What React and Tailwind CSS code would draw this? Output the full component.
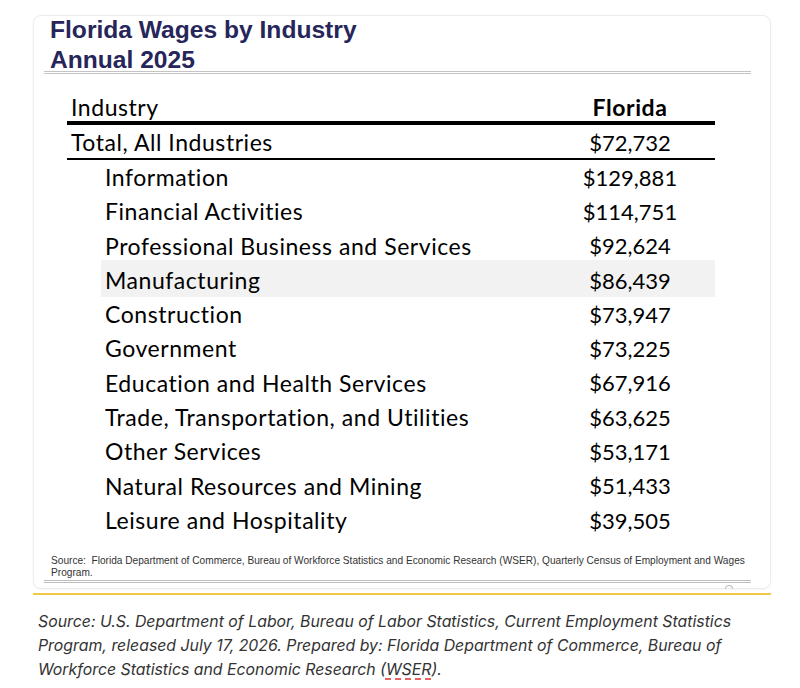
const rows = [
  ["Information", "$129,881"],
  ["Financial Activities", "$114,751"],
  ["Professional Business and Services", "$92,624"],
  ["Manufacturing", "$86,439", true],
  ["Construction", "$73,947"],
  ["Government", "$73,225"],
  ["Education and Health Services", "$67,916"],
  ["Trade, Transportation, and Utilities", "$63,625"],
  ["Other Services", "$53,171"],
  ["Natural Resources and Mining", "$51,433"],
  ["Leisure and Hospitality", "$39,505"],
];

export default function App() {
  return (
    <div className="min-h-[688px] bg-white pl-[33px] pt-[15px]">
      <div className="w-[738px]">
        <div className="relative h-[574px] rounded-lg border border-[#ececec] bg-white shadow-[0_1px_3px_rgba(0,0,0,0.04)]">
          <div className="-mt-[1px] pl-[16px] font-['Liberation_Sans',Arial,sans-serif] text-[24.6px] font-bold leading-[30px] text-[#26265a]">
            <div>Florida Wages by Industry</div>
            <div>Annual 2025</div>
          </div>
          <div className="-mt-[4px] ml-[10px] mr-[19px] h-[3px] border-t-[3px] border-double border-[#c4c4c4]" />
          <div className="ml-[33px] w-[648px] pt-[21px] font-['Lato',sans-serif] text-[22px] text-black">
            <div className="flex h-[30px] items-end border-b-4 border-black">
              <div className="flex-1 pl-[4px] text-[23px] leading-[28px] tracking-[0.55px]">Industry</div>
              <div className="w-[170px] text-center text-[23px] font-bold leading-[28px] tracking-[0.55px]">Florida</div>
            </div>
            <div className="flex h-[35px] items-center border-b-2 border-black pt-[2px]">
              <div className="flex-1 pl-[4px] text-[23px] tracking-[0.55px]">Total, All Industries</div>
              <div className="w-[170px] text-center">$72,732</div>
            </div>
            <div className="pl-[34px]">
              {rows.map(([name, val, hi]) => (
                <div
                  key={name}
                  className={`flex h-[34.3px] items-center ${hi ? "bg-[#f2f2f2] shadow-[0_-3px_0_#f2f2f2]" : ""}`}
                >
                  <div className="flex-1 pl-[4px] text-[23px] tracking-[0.55px]">{name}</div>
                  <div className="w-[170px] text-center">{val}</div>
                </div>
              ))}
            </div>
          </div>
          <div className="mt-[18px] pl-[17px] pr-[20px] font-['Liberation_Sans',Arial,sans-serif] text-[10.15px] leading-[12px] text-[#333]">
            Source:&nbsp; Florida Department of Commerce, Bureau of Workforce Statistics and Economic Research (WSER), Quarterly Census of Employment and Wages Program.
          </div>
          <div className="ml-[10px] mr-[19px] mt-[1px] h-[3px] border-t-[3px] border-double border-[#bdbdbd]" />
          <div className="absolute left-[691px] top-[569px] h-[4px] w-[8px] rounded-t-full border-x border-t border-[#bbb]" />
        </div>
        <div className="mt-[4px] h-[2px] bg-[#f2c84b]" />
      </div>
      <p className="mt-[15px] w-[740px] pl-[5px] font-['Inter',sans-serif] text-[15.85px] italic leading-[24px] text-[#333]">
        Source: U.S. Department of Labor, Bureau of Labor Statistics, Current Employment Statistics Program, released July 17, 2026. Prepared by: Florida Department of Commerce, Bureau of Workforce Statistics and Economic Research (
        <span className="underline decoration-[#e03030] decoration-dashed underline-offset-4">WSER</span>).
      </p>
    </div>
  );
}
